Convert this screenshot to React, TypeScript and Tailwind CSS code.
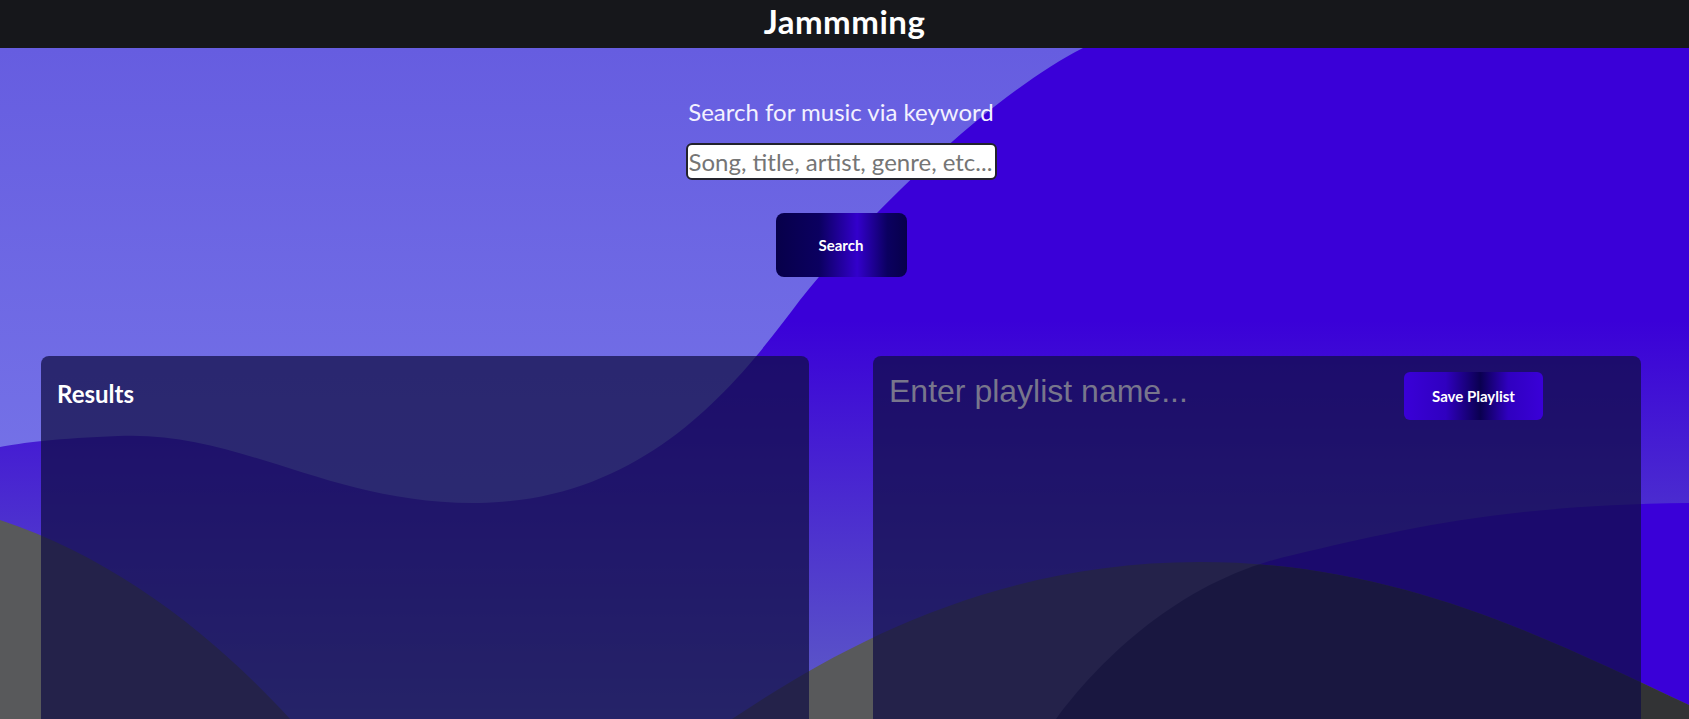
import { useState } from 'react';

const body = "font-['Lato','Open_Sans',sans-serif]";

function Background() {
  return (
    <svg
      className="absolute left-0 top-0 h-[719px] w-full"
      viewBox="0 0 1689 719"
      preserveAspectRatio="none"
    >
      <defs>
        <linearGradient id="sky" gradientUnits="userSpaceOnUse" x1="0" y1="48" x2="0" y2="520">
          <stop offset="0" stopColor="#665de0" />
          <stop offset="1" stopColor="#7674e8" />
        </linearGradient>
        <linearGradient id="wave" gradientUnits="userSpaceOnUse" x1="0" y1="320" x2="0" y2="719">
          <stop offset="0" stopColor="#3a00d8" />
          <stop offset="1" stopColor="#5e5ec6" />
        </linearGradient>
        <clipPath id="rightWave">
          <path d="M1056 719 C1100 660 1180 580 1293 555 C1400 530 1500 505 1689 503 L1689 760 L1000 760 Z" />
        </clipPath>
      </defs>
      <rect x="0" y="0" width="1689" height="719" fill="url(#sky)" />
      {/* big blue wave */}
      <path
        d="M1083 48 C1000 90 880 200 800 300 C740 380 650 500 479 503 C330 505 240 430 118 436 C60 438 20 443 0 447 L0 719 L1689 719 L1689 48 Z"
        fill="url(#wave)"
      />
      {/* right blue hill */}
      <path
        d="M1056 719 C1100 660 1180 580 1293 555 C1400 530 1500 505 1689 503 L1689 719 Z"
        fill="#3a00d8"
      />
      {/* grey hills */}
      <path
        d="M0 520 C120 560 220 640 300 730 C400 840 600 800 732 719 C850 640 1000 562 1200 562 C1400 562 1550 640 1689 705 L1689 760 L0 760 Z"
        fill="#58595b"
      />
      <path
        d="M0 520 C120 560 220 640 300 730 C400 840 600 800 732 719 C850 640 1000 562 1200 562 C1400 562 1550 640 1689 705 L1689 760 L0 760 Z"
        fill="#323335"
        clipPath="url(#rightWave)"
      />
    </svg>
  );
}

export default function App() {
  const [term, setTerm] = useState('');
  const [name, setName] = useState('');

  return (
    <div className={`relative h-screen w-full overflow-hidden ${body}`}>
      <Background />

      <div className="relative">
        <header className="flex h-[48px] w-full items-center justify-center bg-[#16171b]">
          <div className="flex w-[1682px] justify-center pb-[6px]">
            <h1 className="text-[33px] font-bold leading-none tracking-[0.5px] text-white">Jammming</h1>
          </div>
        </header>

        <main className="flex w-[1682px] flex-col items-center pt-[48px]">
          <label className="text-[24px] leading-[32px] text-[#f3f1ff]">Search for music via keyword</label>
          <input
            value={term}
            onChange={e => setTerm(e.target.value)}
            placeholder="Song, title, artist, genre, etc..."
            className="mt-[15px] h-[37px] w-[311px] rounded-[6px] border-2 border-[#22222c] bg-white px-[1px] text-[24px] text-black outline-none placeholder:text-[#757575]"
          />
          <button
            className="mt-[33px] h-[64px] w-[131px] rounded-[8px] bg-[linear-gradient(90deg,#07004a_0%,#0b0060_33%,#3300cc_62%,#0b0060_85%,#07004a_100%)] text-[15px] font-bold text-white"
          >
            Search
          </button>

          <div className="mt-[79px] flex w-full gap-[64px] px-[41px]">
            <section className="h-[600px] w-[768px] rounded-lg bg-[rgba(17,14,68,0.73)] px-4 pt-[22px]">
              <h2 className="text-[24px] font-bold leading-[32px] text-white">Results</h2>
            </section>

            <section className="h-[600px] w-[768px] rounded-lg bg-[rgba(17,14,68,0.73)] p-4">
              <div className="flex items-start">
                <input
                  value={name}
                  onChange={e => setName(e.target.value)}
                  placeholder="Enter playlist name..."
                  className="mt-[1px] h-[36px] w-[480px] bg-transparent font-['Liberation_Sans',Arial,sans-serif] text-[32px] text-white outline-none placeholder:text-[#78768c]"
                />
                <button
                  className="ml-auto mr-[82px] h-[48px] w-[139px] rounded-[6px] bg-[linear-gradient(90deg,#3a00d8_0%,#3000c0_30%,#0a0050_55%,#3000c0_75%,#3a00d8_100%)] text-[15px] font-bold text-white"
                >
                  Save Playlist
                </button>
              </div>
            </section>
          </div>
        </main>
      </div>
    </div>
  );
}
